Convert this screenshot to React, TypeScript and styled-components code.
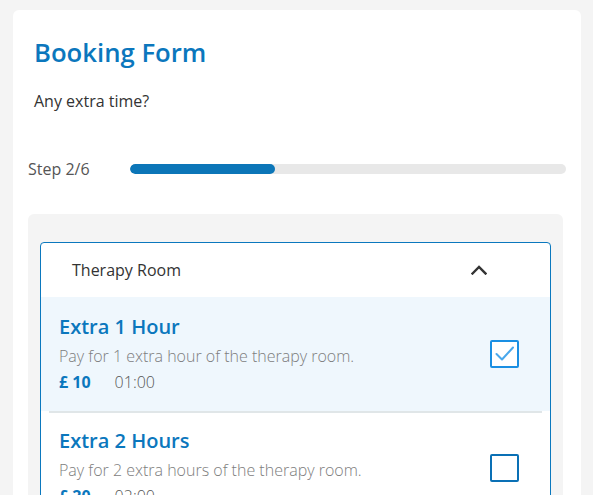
import React from "react";
import styled, { createGlobalStyle } from "styled-components";

const GlobalStyle = createGlobalStyle`
  html, body { margin: 0; padding: 0; background: #f4f4f4; }
  body { font-family: "Open Sans", "Noto Sans", sans-serif; }
  * { box-sizing: border-box; }
`;

const Page = styled.div`
  padding: 10px 12px 0 13px;
  height: 495px;
  overflow: hidden;
`;

const Card = styled.div`
  background: #ffffff;
  border-radius: 6px;
  padding: 25px 15px 40px 15px;
`;

const Title = styled.h1`
  margin: 0 0 0 6px;
  font-size: 25.7px;
  line-height: 36px;
  font-weight: 600;
  color: #0b77bd;
`;

const Question = styled.p`
  margin: 20px 0 0 6px;
  font-size: 16px;
  line-height: 20px;
  color: #333333;
`;

const StepRow = styled.div`
  display: flex;
  align-items: center;
  margin-top: 48px;
  gap: 40px;
`;

const StepLabel = styled.span`
  font-size: 16px;
  line-height: 20px;
  color: #555555;
  white-space: nowrap;
`;

const Track = styled.div`
  flex: 1;
  height: 10px;
  border-radius: 5px;
  background: #e8e8e8;
  overflow: hidden;
`;

const Fill = styled.div`
  height: 100%;
  border-radius: 5px;
  background: #0c76b8;
`;

const Panel = styled.div`
  margin: 35px 3px 0 0;
  background: #f4f4f4;
  border-radius: 6px;
  padding: 28px 12px 40px 12px;
`;

const Accordion = styled.div`
  background: #ffffff;
  border: 1px solid #0b78be;
  border-radius: 4px;
  overflow: hidden;
`;

const Header = styled.div`
  height: 54px;
  display: flex;
  align-items: center;
  justify-content: space-between;
  padding: 0 63px 0 31px;
`;

const HeaderText = styled.span`
  font-size: 16px;
  line-height: 20px;
  color: #333333;
`;

const Option = styled.div<{ $selected?: boolean; $divider?: boolean }>`
  position: relative;
  display: flex;
  align-items: center;
  justify-content: space-between;
  padding: 16px 31px 18px 18px;
  background: ${(p) => (p.$selected ? "#eff7fd" : "#ffffff")};
  ${(p) =>
    p.$divider &&
    `
    &::before {
      content: "";
      position: absolute;
      top: 0;
      left: 8px;
      right: 8px;
      height: 2px;
      background: #e0e6e8;
    }
  `}
`;

const OptionBody = styled.div`
  display: flex;
  flex-direction: column;
`;

const OptionTitle = styled.div`
  font-size: 20px;
  line-height: 27px;
  font-weight: 600;
  color: #0b77bd;
`;

const OptionDesc = styled.div`
  margin-top: 5px;
  font-size: 16px;
  line-height: 22px;
  font-weight: 300;
  color: #7d7d7d;
`;

const PriceRow = styled.div`
  margin-top: 4px;
  display: flex;
  gap: 24px;
  font-size: 16px;
  line-height: 22px;
`;

const Price = styled.span`
  font-weight: 700;
  color: #0b77bd;
`;

const Duration = styled.span`
  font-weight: 300;
  color: #555555;
`;

const Checkbox = styled.div<{ $checked?: boolean }>`
  width: 29px;
  height: 28px;
  margin-top: 2px;
  flex-shrink: 0;
  border: 2px solid ${(p) => (p.$checked ? "#1a8fe3" : "#0a70b5")};
  border-radius: 2px;
  background: #ffffff;
  display: flex;
  align-items: center;
  justify-content: center;
`;

const Chevron = () => (
  <svg width="16" height="10" viewBox="0 0 16 10" fill="none">
    <path d="M1.5 8.5 L8 2 L14.5 8.5" stroke="#333333" strokeWidth="2.4" strokeLinecap="square" />
  </svg>
);

const Check = () => (
  <svg width="25" height="24" viewBox="0 0 25 24" fill="none">
    <path d="M4.5 12 L10 17.5 L21 5.5" stroke="#4aa8ec" strokeWidth="2" strokeLinecap="round" strokeLinejoin="round" />
  </svg>
);

const options = [
  { title: "Extra 1 Hour", desc: "Pay for 1 extra hour of the therapy room.", price: "£ 10", time: "01:00", checked: true },
  { title: "Extra 2 Hours", desc: "Pay for 2 extra hours of the therapy room.", price: "£ 20", time: "02:00", checked: false },
];

export default function App() {
  const progress = (2 / 6) * 100;
  return (
    <>
      <GlobalStyle />
      <Page>
        <Card>
          <Title>Booking Form</Title>
          <Question>Any extra time?</Question>
          <StepRow>
            <StepLabel>Step 2/6</StepLabel>
            <Track>
              <Fill style={{ width: `${progress}%` }} />
            </Track>
          </StepRow>
          <Panel>
            <Accordion>
              <Header>
                <HeaderText>Therapy Room</HeaderText>
                <Chevron />
              </Header>
              {options.map((o, i) => (
                <Option key={o.title} $selected={o.checked} $divider={i > 0}>
                  <OptionBody>
                    <OptionTitle>{o.title}</OptionTitle>
                    <OptionDesc>{o.desc}</OptionDesc>
                    <PriceRow>
                      <Price>{o.price}</Price>
                      <Duration>{o.time}</Duration>
                    </PriceRow>
                  </OptionBody>
                  <Checkbox $checked={o.checked}>{o.checked && <Check />}</Checkbox>
                </Option>
              ))}
            </Accordion>
          </Panel>
        </Card>
      </Page>
    </>
  );
}
